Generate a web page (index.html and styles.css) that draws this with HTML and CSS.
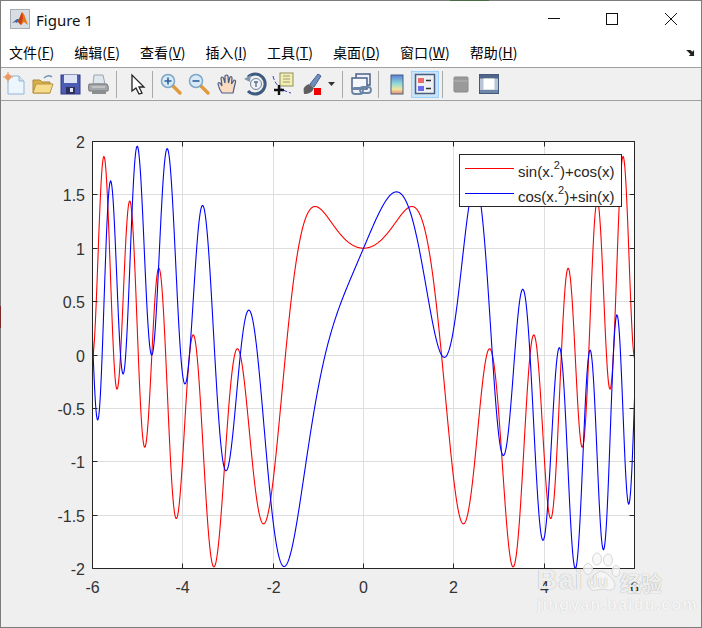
FILE: index.html
```html
<!DOCTYPE html>
<html lang="zh">
<head>
    <meta charset="UTF-8">
    <title>Figure 1</title>
    <link rel="stylesheet" href="styles.css">
</head>
<body>
<div class="window">
    <span class="peek peek-top"></span>
    <span class="peek peek-left"></span>
    <div class="titlebar">
        <svg class="app-icon" width="20" height="20" viewBox="0 0 20 20">
            <rect x="0.5" y="0.5" width="19" height="19" fill="#d8dde4" stroke="#a8adb4"/>
            <path d="M2 14 L7 11 L9 10 L12 3 L14 5 L18 16 L14 13 L11 16 L8 13 L5 13 Z" fill="#e8761c"/>
            <path d="M2 14 L7 10 L9 10 L7 14 L5 13 Z" fill="#2d6fae"/>
            <path d="M12 3 L9 10 L8 13 L11 16 L13 9 Z" fill="#c9401a"/>
        </svg>
        <span class="title">Figure 1</span>
        <div class="winbtns">
            <svg width="14" height="14" viewBox="0 0 14 14"><path d="M2 6.500H14" stroke="#111"/></svg>
            <svg width="14" height="14" viewBox="0 0 14 14"><rect x="1.500" y="1.500" width="11" height="11" fill="none" stroke="#111"/></svg>
            <svg width="14" height="14" viewBox="0 0 14 14"><path d="M1 1L13 13M13 1L1 13" stroke="#111"/></svg>
        </div>
    </div>

    <div class="menubar">
        <span>文件(<u>F</u>)</span>
        <span>编辑(<u>E</u>)</span>
        <span>查看(<u>V</u>)</span>
        <span>插入(<u>I</u>)</span>
        <span>工具(<u>T</u>)</span>
        <span>桌面(<u>D</u>)</span>
        <span>窗口(<u>W</u>)</span>
        <span>帮助(<u>H</u>)</span>
        <svg class="dock" width="9" height="8" viewBox="0 0 10 9"><path d="M0 1L5 1L7 3L9 1L9 8L3 8L5 6L1 2Z" fill="#222"/></svg>
    </div>

    <div class="toolbar">
        <div class="group g-file">
            <div class="tool"><svg width="24" height="24" viewBox="0 0 24 24">
                <path d="M6 4H17L22 9V22H6Z" fill="#eef6fd" stroke="#8fb4d8"/>
                <path d="M17 4V9H22" fill="#cfe2f3" stroke="#8fb4d8"/>
                <circle cx="6" cy="5" r="3" fill="#f0a070"/><path d="M6 0V10M1 5H11" stroke="#e8905a"/>
            </svg></div>
            <div class="tool"><svg width="24" height="24" viewBox="0 0 24 24">
                <path d="M3 8H10L12 10H20V21H3Z" fill="#d9b04a" stroke="#a98a3c"/>
                <path d="M3 21L6 12H23L20 21Z" fill="#f6dc8c" stroke="#b8963e"/>
                <path d="M14 6Q18 2 22 5" fill="none" stroke="#6f93b5" stroke-width="1.500"/>
            </svg></div>
            <div class="tool"><svg width="24" height="24" viewBox="0 0 24 24">
                <rect x="3" y="3" width="19" height="19" fill="#4c5cb0" stroke="#30398a"/>
                <rect x="6" y="3" width="13" height="8" fill="#dfe4f6"/>
                <rect x="8" y="15" width="9" height="7" fill="#2a2f60"/>
                <rect x="12" y="16" width="3" height="4" fill="#dfe4f6"/>
            </svg></div>
            <div class="tool"><svg width="24" height="24" viewBox="0 0 24 24">
                <path d="M8 3H17L19 12H7Z" fill="#dfe6ee" stroke="#9aa6b2"/>
                <path d="M3 12H21Q23 14 22 19H3Q2 14 3 12Z" fill="#a5a8ab" stroke="#777"/>
                <rect x="6" y="19" width="14" height="3" fill="#8b8e91"/>
                <path d="M6 15H19" stroke="#dcdcdc"/>
            </svg></div>
        </div>
        <div class="group g-pointer">
            <div class="tool"><svg width="24" height="24" viewBox="0 0 24 24">
                <path d="M7 3V19L11 16L14 22L17 21L14 15H19Z" fill="#fff" stroke="#222" stroke-width="1.300"/>
            </svg></div>
        </div>
        <div class="group g-explore">
            <div class="tool"><svg width="24" height="24" viewBox="0 0 24 24">
                <path d="M14 14L21 21" stroke="#e09a3c" stroke-width="3.400" stroke-linecap="round"/>
                <circle cx="9" cy="9" r="6.500" fill="#d7eaf7" stroke="#7fa6c4" stroke-width="1.500"/>
                <path d="M5.500 9H12.500M9 5.500V12.500" stroke="#2f5f96" stroke-width="1.600"/>
            </svg></div>
            <div class="tool"><svg width="24" height="24" viewBox="0 0 24 24">
                <path d="M14 14L21 21" stroke="#e09a3c" stroke-width="3.400" stroke-linecap="round"/>
                <circle cx="9" cy="9" r="6.500" fill="#d7eaf7" stroke="#7fa6c4" stroke-width="1.500"/>
                <path d="M5.500 9H12.500" stroke="#2f5f96" stroke-width="1.600"/>
            </svg></div>
            <div class="tool"><svg width="24" height="24" viewBox="0 0 24 24">
                <path d="M7 21Q4 17 3 12Q3 10 5 11L7 14L6 6Q7 4 8.500 6L10 11L10 4Q12 2 13 4L13.500 11L15 5Q17 4 17 6L16.500 12L19 8Q21 8 20.500 10Q19 16 18 21Z" fill="#fbdcc2" stroke="#4a5f88" stroke-width="1.200"/>
            </svg></div>
            <div class="tool"><svg width="24" height="24" viewBox="0 0 24 24">
                <path d="M5 5A10 10 0 1 1 5 19" fill="none" stroke="#3d5a80" stroke-width="3"/>
                <path d="M1 7L8 3L7 10Z" fill="#8296ad"/>
                <circle cx="13" cy="12" r="5.500" fill="#eef2f6" stroke="#6d8199"/>
                <path d="M11 10H15M13 10V15" stroke="#516a86" stroke-width="1.300"/>
            </svg></div>
            <div class="tool"><svg width="24" height="24" viewBox="0 0 24 24">
                <rect x="9" y="1" width="13" height="13" fill="#f3eeb4" stroke="#8f8f60"/>
                <path d="M12 4H19M12 7H19M12 10H19" stroke="#9a9a70"/>
                <path d="M2 4Q5 17 20 21" fill="none" stroke="#3240c0" stroke-dasharray="4 2"/>
                <path d="M8 13V23M3 18H13" stroke="#111" stroke-width="2.400"/>
            </svg></div>
            <div class="tool"><svg width="24" height="24" viewBox="0 0 24 24">
                <path d="M11 12L19 2L22 4L15 15Z" fill="#6f8fc0" stroke="#47638f"/>
                <path d="M5 22Q3 14 10 12L15 16Q13 22 5 22Z" fill="#5f5f5f"/>
                <rect x="15" y="16" width="7" height="7" fill="#f00000"/>
            </svg></div>
            <svg class="caret" width="12" height="24" viewBox="0 0 12 24"><path d="M3 10H10L6.500 14Z" fill="#333"/></svg>
        </div>
        <div class="group g-link">
            <div class="tool"><svg width="24" height="24" viewBox="0 0 24 24">
                <rect x="7" y="2" width="14" height="11" fill="#eef2f8" stroke="#4a6288" stroke-width="1.500"/>
                <rect x="3" y="6" width="15" height="11" fill="#f5f7fb" stroke="#4a6288" stroke-width="1.500"/>
                <rect x="3" y="16" width="11" height="6" rx="3" fill="none" stroke="#6a84a6" stroke-width="1.800"/>
                <rect x="11" y="15" width="11" height="6" rx="3" fill="none" stroke="#6a84a6" stroke-width="1.800"/>
            </svg></div>
        </div>
        <div class="group g-insert">
            <div class="tool"><svg width="24" height="24" viewBox="0 0 24 24">
                <defs><linearGradient id="cbar" x1="0" y1="0" x2="0" y2="1">
                    <stop offset="0" stop-color="#5a7fd8"/><stop offset="0.45" stop-color="#8fd8d8"/>
                    <stop offset="0.75" stop-color="#f0e6a0"/><stop offset="1" stop-color="#e88a70"/>
                </linearGradient></defs>
                <rect x="6" y="3" width="12" height="19" fill="url(#cbar)" stroke="#4a5f80"/>
            </svg></div>
            <div class="tool active"><svg width="24" height="24" viewBox="0 0 24 24">
                <rect x="2.500" y="2.500" width="19" height="19" fill="#eef0f4" stroke="#4a5f80" stroke-width="1.500"/>
                <rect x="5" y="6" width="6" height="5" fill="#ea6a6a"/>
                <rect x="5" y="14" width="6" height="5" fill="#6a6aea"/>
                <path d="M13 8.500H18M13 16.500H18" stroke="#333" stroke-width="1.500"/>
            </svg></div>
        </div>
        <div class="group g-view">
            <div class="tool"><svg width="24" height="24" viewBox="0 0 24 24">
                <rect x="5" y="5" width="14" height="15" rx="1" fill="#9a9a9a" stroke="#8a8a8a"/>
                <path d="M5 9H19" stroke="#b5b5b5"/>
            </svg></div>
            <div class="tool"><svg width="24" height="24" viewBox="0 0 24 24">
                <rect x="2.500" y="2.500" width="19" height="19" fill="#b9c4d4" stroke="#43597c"/>
                <rect x="3" y="3" width="18" height="3.500" fill="#4f6688"/>
                <rect x="3" y="18" width="18" height="3" fill="#6f86a8"/>
                <rect x="6.500" y="6.500" width="11" height="11" fill="#fff"/>
            </svg></div>
        </div>
    </div>

    <div class="figure">
        <svg class="plot" id="plot" width="700" height="526" viewBox="1 101 700 526"></svg>
        <div class="watermark">
            <div class="wm-top">
                <span class="wm-bai">Bai</span>
                <svg class="wm-paw" width="38" height="42" viewBox="0 0 38 42">
                    <g stroke="#d8d8d8" stroke-width="1" fill="#f6f6f6" fill-opacity="0.8">
                        <ellipse cx="6" cy="17" rx="4.500" ry="5.500"/>
                        <ellipse cx="15" cy="7" rx="4.500" ry="6"/>
                        <ellipse cx="26" cy="8" rx="4.500" ry="6"/>
                        <ellipse cx="34" cy="19" rx="4" ry="5.500"/>
                        <path d="M19 19Q10 22 7 32Q7 40 15 38Q20 36 26 38Q33 39 33 32Q29 22 19 19Z"/>
                    </g>
                </svg>
                <span class="wm-du">du</span>
                <span class="wm-jy">经验</span>
            </div>
            <div class="wm-url">jingyan.baidu.com</div>
        </div>
    </div>
</div>
<script src="script.js"></script>
</body>
</html>
```

FILE: styles.css
```css
* {
    margin: 0;
    padding: 0;
    box-sizing: border-box;
}

html, body {
    width: 702px;
    height: 628px;
    overflow: hidden;
}

.window {
    width: 702px;
    height: 628px;
    display: flex;
    flex-direction: column;
    border: 1px solid #7c7c7c;
    background-color: #fff;
    position: relative;
}

/* bits of the desktop showing through the window edge */
.peek {
    position: absolute;
    z-index: 2;
}

.peek-top {
    left: 449px;
    top: -1px;
    width: 39px;
    height: 1px;
    background-color: #4a6a46;
}

.peek-left {
    left: -1px;
    top: 305px;
    width: 1px;
    height: 22px;
    background-color: #7a2a2a;
}

.titlebar {
    height: 35px;
    flex: none;
    display: flex;
    align-items: center;
    padding-left: 9px;
    font-family: "Noto Sans", sans-serif;
    font-size: 15px;
    color: #111;
}

.app-icon {
    margin-right: 6px;
}

.title {
    margin-top: 2px;
}

.winbtns {
    margin-left: auto;
    display: flex;
    gap: 45px;
    padding-right: 23px;
    padding-top: 1px;
}

.menubar {
    height: 32px;
    flex: none;
    display: flex;
    align-items: center;
    gap: 20px;
    padding-left: 8px;
    font-family: "Noto Sans CJK SC", "Noto Sans", sans-serif;
    font-size: 14px;
    color: #000;
    border-bottom: 1px solid #a0a0a0;
    position: relative;
}

.dock {
    position: absolute;
    right: 6px;
    top: 13px;
}

.toolbar {
    height: 33px;
    flex: none;
    display: flex;
    align-items: center;
    background-color: #f0f0f0;
    border-bottom: 1px solid #a0a0a0;
}

.group {
    height: 27px;
    display: flex;
    align-items: center;
    border-right: 1px solid #a9a9a9;
}

.g-file { width: 117px; margin-left: -1px; }
.g-pointer { width: 36px; padding-left: 6px; }
.g-explore { width: 190px; padding-left: 4px; }
.g-link { width: 36px; padding-left: 4px; }
.g-insert { width: 64px; padding-left: 4px; }
.g-view { padding-left: 4px; border-right: none; }

.tool {
    width: 28px;
    height: 27px;
    display: flex;
    align-items: center;
    justify-content: center;
    border: 1px solid transparent;
}

.tool.active {
    background-color: #cce4f7;
    border-color: #99d1ff;
}

.caret {
    flex: none;
}

.figure {
    flex: 1;
    background-color: #efefef;
    position: relative;
    overflow: hidden;
}

.plot {
    display: block;
}

.plot text {
    font-family: "Liberation Sans", Arial, sans-serif;
    font-size: 16px;
    fill: #333;
}

.plot .legend-text {
    font-size: 15px;
    fill: #262626;
}

.plot .sup {
    font-size: 11px;
}

.watermark {
    position: absolute;
    left: 536px;
    top: 451px;
    width: 140px;
    color: rgba(255, 255, 255, 0.85);
    text-shadow: 0 0 1px rgba(0, 0, 0, 0.4);
}

.wm-top {
    height: 44px;
    display: flex;
    align-items: flex-end;
    position: relative;
}

.wm-bai {
    font-family: "Liberation Sans", sans-serif;
    font-weight: bold;
    font-size: 28px;
    line-height: 32px;
    letter-spacing: 1px;
}

.wm-paw {
    position: absolute;
    left: 45px;
    top: 0;
}

.wm-du {
    position: absolute;
    left: 50px;
    top: 20px;
    font-family: "Liberation Sans", sans-serif;
    font-weight: bold;
    font-size: 17px;
}

.wm-jy {
    position: absolute;
    left: 83px;
    top: 17px;
    font-family: "Noto Sans CJK SC", sans-serif;
    font-weight: bold;
    font-size: 21px;
    line-height: 26px;
}

.wm-url {
    font-family: "Liberation Sans", sans-serif;
    font-weight: bold;
    font-size: 16px;
    line-height: 18px;
    letter-spacing: 1.2px;
    white-space: nowrap;
    text-shadow: 0 0 1px rgba(0, 0, 0, 0.22);
}
```

FILE: script.js
```js
const NS = "http://www.w3.org/2000/svg";
const plot = document.getElementById("plot");

// axes box in window pixels
const left = 92.5, right = 634.5, top_ = 141.5, bottom = 568.5;
const sx = x => left + (x + 6) * (right - left) / 12;
const sy = y => top_ + (2 - y) * (bottom - top_) / 4;
const snap = v => Math.floor(v) + 0.5;

function add(parent, tag, attrs, text) {
    const el = document.createElementNS(NS, tag);
    for (const k in attrs) el.setAttribute(k, attrs[k]);
    if (text !== undefined) el.textContent = text;
    parent.appendChild(el);
    return el;
}

function line(x1, y1, x2, y2, stroke) {
    add(plot, "line", { x1, y1, x2, y2, stroke, "stroke-width": 1 });
}

const defs = add(plot, "defs", {});
const clip = add(defs, "clipPath", { id: "axesClip" });
add(clip, "rect", { x: left, y: top_, width: right - left, height: bottom - top_ });

add(plot, "rect", { x: left, y: top_, width: right - left, height: bottom - top_, fill: "#fff" });

// grid
for (let x = -4; x <= 4; x += 2) {
    const px = snap(sx(x));
    line(px, top_, px, bottom, "#dedede");
}
for (let y = -1.5; y <= 1.5; y += 0.5) {
    const py = snap(sy(y));
    line(left, py, right, py, "#dedede");
}

// curves
function curve(fn, color) {
    const pts = [];
    for (let i = 0; i <= 1200; i++) {
        const x = -6 + i * 0.01;
        pts.push(sx(x).toFixed(2) + "," + sy(fn(x)).toFixed(2));
    }
    add(plot, "polyline", {
        points: pts.join(" "), fill: "none", stroke: color,
        "stroke-width": 1.1, "clip-path": "url(#axesClip)"
    });
}
curve(x => Math.sin(x * x) + Math.cos(x), "#f00");
curve(x => Math.cos(x * x) + Math.sin(x), "#00f");

// box and ticks
add(plot, "path", {
    d: `M${left} ${bottom}V${top_}H${right}V${bottom}Z`,
    fill: "none", stroke: "#262626", "stroke-width": 1
});
for (let x = -6; x <= 6; x += 2) {
    const px = snap(sx(x));
    line(px, bottom, px, bottom - 5, "#262626");
    line(px, top_, px, top_ + 5, "#262626");
    add(plot, "text", { x: px, y: bottom + 24.5, "text-anchor": "middle" }, String(x));
}
for (let y = -2; y <= 2; y += 0.5) {
    const py = snap(sy(y));
    line(left, py, left + 5, py, "#262626");
    line(right, py, right - 5, py, "#262626");
    add(plot, "text", { x: 85, y: py + 6, "text-anchor": "end" }, String(y));
}

// legend
add(plot, "rect", { x: 459.5, y: 154.5, width: 162, height: 52, fill: "#fff", stroke: "#262626" });
line(465, 168.5, 514, 168.5, "#f00");
line(465, 193.5, 514, 193.5, "#00f");

function legendText(y, before, after) {
    const t = add(plot, "text", { x: 518, y, class: "legend-text" });
    add(t, "tspan", {}, before);
    add(t, "tspan", { class: "sup", dy: -8.5 }, "2");
    add(t, "tspan", { dy: 8.5 }, after);
}
legendText(177, "sin(x.", ")+cos(x)");
legendText(202, "cos(x.", ")+sin(x)");
```
